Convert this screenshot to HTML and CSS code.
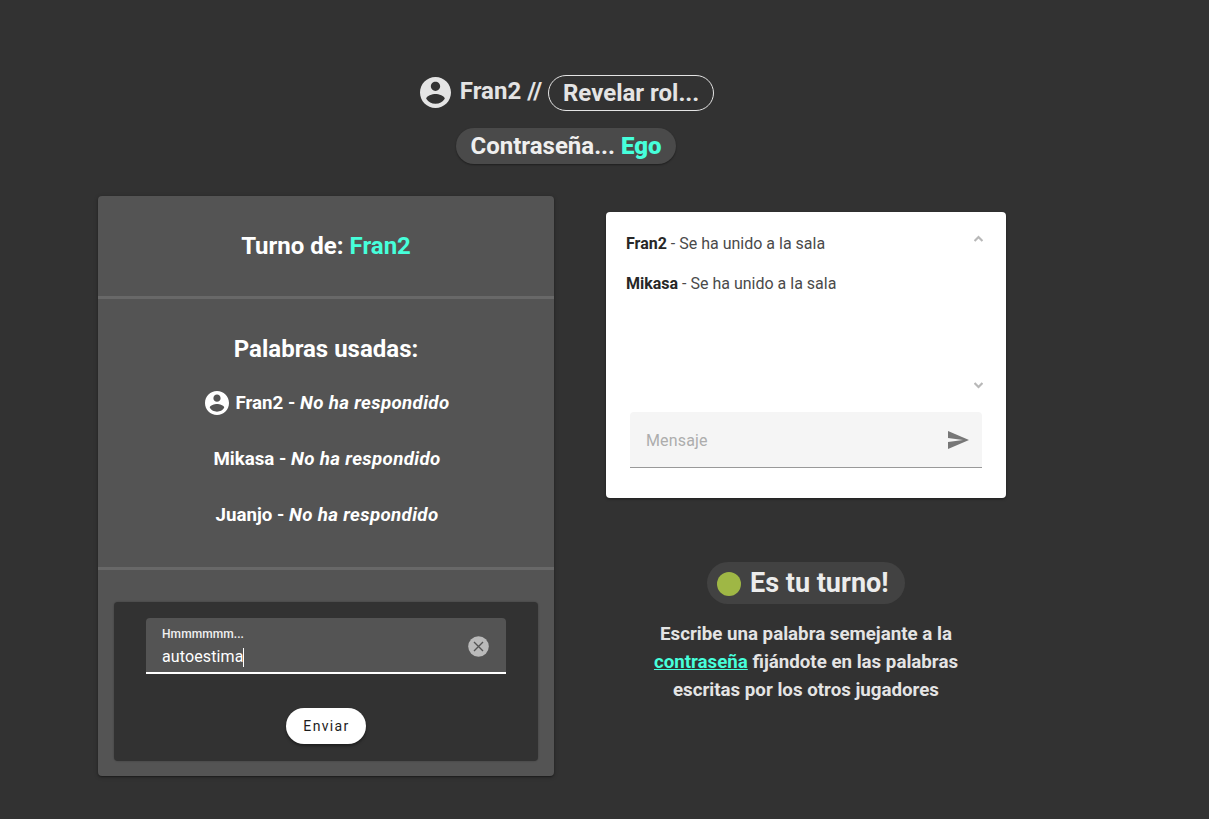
FILE: index.html
```
<!DOCTYPE html>
<html lang="es">
<head>
<meta charset="utf-8">
<title>Sala de juego</title>
<link rel="stylesheet" href="styles.css">
</head>
<body>
<svg class="defs" aria-hidden="true">
  <symbol id="account" viewBox="2 2 20 20"><path d="M12 2C6.48 2 2 6.48 2 12s4.48 10 10 10 10-4.48 10-10S17.52 2 12 2zm0 3c1.66 0 3 1.34 3 3s-1.34 3-3 3-3-1.34-3-3 1.34-3 3-3zm0 14.2a7.2 7.2 0 0 1-6-3.22c.03-1.99 4-3.08 6-3.08 1.99 0 5.97 1.09 6 3.08a7.2 7.2 0 0 1-6 3.22z"/></symbol>
</svg>
<header class="header">
  <div class="player">
    <svg class="avatar"><use href="#account"/></svg>
    <span class="player-name">Fran2 //</span>
    <button class="reveal">Revelar rol...</button>
  </div>
  <div class="password"><span>Contraseña... <b class="accent">Ego</b></span></div>
</header>
<main class="columns">
  <section class="board">
    <div class="turn"><h2>Turno de: <span class="accent">Fran2</span></h2></div>
    <div class="words">
      <h2>Palabras usadas:</h2>
      <ul class="word-list">
        <li><svg class="avatar-small"><use href="#account"/></svg><span>Fran2 - <i>No ha respondido</i></span></li>
        <li><span>Mikasa - <i>No ha respondido</i></span></li>
        <li><span>Juanjo - <i>No ha respondido</i></span></li>
      </ul>
    </div>
    <div class="answer">
      <div class="answer-card">
        <div class="field">
          <div class="field-text">
            <span class="label">Hmmmmmm...</span>
            <span class="value">autoestima<span class="caret"></span></span>
          </div>
          <svg class="clear" viewBox="0 0 21 21"><circle cx="10.5" cy="10.5" r="10.3"/><path d="M6 6l9 9M15 6l-9 9"/></svg>
        </div>
        <button class="send">Enviar</button>
      </div>
    </div>
  </section>
  <aside class="side">
    <div class="chat">
      <div class="messages">
        <div class="log">
          <p><b>Fran2</b> - Se ha unido a la sala</p>
          <p><b>Mikasa</b> - Se ha unido a la sala</p>
        </div>
        <div class="scroll">
          <svg viewBox="0 0 8 6"><path d="M.5 5.2L4 1.6l3.5 3.6"/></svg>
          <svg viewBox="0 0 8 6"><path d="M.5 .8L4 4.4 7.5 .8"/></svg>
        </div>
      </div>
      <div class="compose">
        <span>Mensaje</span>
        <svg class="plane" viewBox="2 3 21 18"><path d="M2 21l21-9L2 3v7l15 2-15 2v7z"/></svg>
      </div>
    </div>
    <div class="status"><span class="dot"></span><span>Es tu turno!</span></div>
    <p class="hint">Escribe una palabra semejante a la<br><a class="accent">contraseña</a> fijándote en las palabras<br>escritas por los otros jugadores</p>
  </aside>
</main>
</body>
</html>
```

FILE: styles.css
```
* { box-sizing: border-box; }
body {
  margin: 0;
  height: 819px;
  overflow: hidden;
  background: #323232;
  color: #e4e4e4;
  font-family: Roboto, sans-serif;
}
h2, p, ul { margin: 0; padding: 0; }
button { font-family: inherit; }
.defs { display: none; }
.accent { color: #46ffdb; }

.header {
  width: 1132px;
  padding-top: 75px;
  display: flex;
  flex-direction: column;
  align-items: center;
  gap: 17px;
  font-size: 24px;
  font-weight: 700;
}
.player { display: flex; height: 36px; padding-left: 2px; }
.avatar { width: 31px; height: 31px; margin: 2px 9px 0 0; fill: #e4e4e4; }
.player-name { line-height: 32px; margin-right: 6px; }
.reveal {
  height: 36px;
  width: 166px;
  padding: 0;
  border: 1px solid #e4e4e4;
  border-radius: 18px;
  background: none;
  color: #e4e4e4;
  font-size: 24px;
  font-weight: 700;
  line-height: 34px;
}
.password {
  width: 220px;
  height: 36px;
  border-radius: 18px;
  background: #4a4a4a;
  box-shadow: 0 1px 2px rgba(0, 0, 0, .4);
  color: #efefef;
  text-align: center;
  line-height: 36px;
}

.columns {
  display: flex;
  align-items: flex-start;
  gap: 52px;
  padding: 32px 0 0 98px;
}
.board {
  width: 456px;
  height: 580px;
  border-radius: 4px;
  background: #545454;
  box-shadow: 0 1px 4px rgba(0, 0, 0, .3), 0 1px 1px rgba(0, 0, 0, .25);
  color: #fff;
  text-align: center;
}
.board h2 { font-size: 24px; font-weight: 700; line-height: 32px; }
.turn { height: 103px; padding-top: 34px; border-bottom: 3px solid #686868; }
.words { height: 271px; padding-top: 34px; border-bottom: 3px solid #686868; }
.word-list {
  display: flex;
  flex-direction: column;
  gap: 28px;
  margin-top: 24px;
  padding-left: 2px;
  list-style: none;
  font-size: 18.72px;
  font-weight: 700;
  line-height: 28px;
}
.word-list li { display: flex; justify-content: center; height: 28px; }
.word-list i { letter-spacing: .36px; }
.avatar-small { width: 24px; height: 24px; margin: 2px 7px 0 0; fill: #fff; }
.answer { padding: 32px 16px 0; }
.answer-card {
  height: 159px;
  padding: 16px 32px;
  border-radius: 4px;
  background: #323232;
  box-shadow: 0 0 2px rgba(0, 0, 0, .3);
}
.field {
  display: flex;
  justify-content: space-between;
  height: 56px;
  padding: 8px 17.5px 0 16px;
  border-bottom: 2px solid #fff;
  border-radius: 4px 4px 0 0;
  background: #545454;
}
.field-text { display: flex; flex-direction: column; text-align: left; }
.label { font-size: 12px; font-weight: 500; line-height: 16px; letter-spacing: .08px; color: #f0f0f0; }
.value { display: flex; align-items: center; font-size: 16px; line-height: 30px; letter-spacing: .12px; }
.caret { width: 1px; height: 19px; margin-left: -1px; background: #fff; }
.clear { width: 21px; height: 21px; margin-top: 9.5px; }
.clear circle { fill: #bababa; }
.clear path { stroke: #545454; stroke-width: 1.4; }
.send {
  display: block;
  width: 80px;
  height: 36px;
  margin: 34px auto 0;
  padding: 0 0 0 1px;
  border: 0;
  border-radius: 18px;
  background: #fff;
  box-shadow: 0 2px 3px rgba(0, 0, 0, .4);
  color: #1d1d1d;
  font-size: 14px;
  letter-spacing: 1.35px;
}

.side { width: 400px; padding-top: 16px; display: flex; flex-direction: column; align-items: center; }
.chat {
  width: 400px;
  height: 286px;
  border-radius: 4px;
  background: #fff;
  box-shadow: 0 1px 3px rgba(0, 0, 0, .4);
}
.messages { display: flex; justify-content: space-between; height: 200px; padding: 20px 23px 20px 20px; }
.log { color: #4a4a4a; font-size: 16px; line-height: 24px; }
.log p { margin-bottom: 16px; }
.log b { color: #272727; font-weight: 700; }
.scroll { display: flex; flex-direction: column; justify-content: space-between; padding: 3px 0; }
.scroll svg { width: 9px; height: 7px; fill: none; stroke: #b8b8b8; stroke-width: 1.9; }
.compose {
  display: flex;
  align-items: center;
  justify-content: space-between;
  height: 56px;
  margin: 0 24px;
  padding: 1px 13px 0 16px;
  border-bottom: 1px solid #999;
  border-radius: 4px 4px 0 0;
  background: #f5f5f5;
  color: #adadad;
  font-size: 16px;
  letter-spacing: .15px;
}
.plane { width: 21px; height: 18px; fill: #777; }
.status {
  display: flex;
  align-items: center;
  width: 198px;
  height: 42px;
  margin-top: 64px;
  padding-left: 10px;
  border-radius: 21px;
  background: #424242;
  color: #ececec;
  font-size: 27px;
  font-weight: 700;
}
.dot { width: 24px; height: 24px; margin: 2px 9px 0 0; border-radius: 50%; background: #9fb745; }
.hint { margin-top: 16px; text-align: center; font-size: 18.72px; font-weight: 700; line-height: 28px; }
.hint a { text-decoration: underline; }
```
